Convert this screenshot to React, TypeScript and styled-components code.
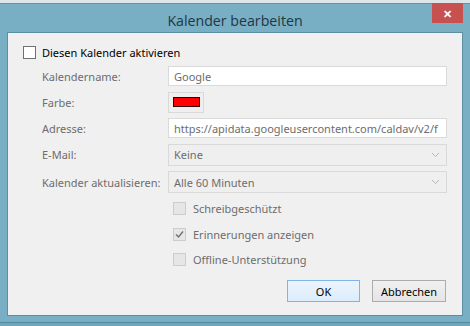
import styled, { createGlobalStyle } from "styled-components";

const GlobalStyle = createGlobalStyle`
  html, body {
    margin: 0;
    padding: 0;
    background: #dfe7eb;
  }
  * {
    box-sizing: border-box;
  }
`;

function App() {
  return (
    <>
      <GlobalStyle />
      <Screen>
        <Backdrop />
        <Window>
          <TitleBar>
            <Title>Kalender bearbeiten</Title>
            <CloseButton>✕</CloseButton>
          </TitleBar>
          <Content>
            <CheckRow>
              <Box />
              <span>Diesen Kalender aktivieren</span>
            </CheckRow>
            <Form>
              <Label>Kalendername:</Label>
              <TextInput>Google</TextInput>
              <Label>Farbe:</Label>
              <ColorButton>
                <Swatch />
              </ColorButton>
              <Label>Adresse:</Label>
              <TextInput>https://apidata.googleusercontent.com/caldav/v2/f</TextInput>
              <Label>E-Mail:</Label>
              <Select>
                Keine
                <Chevron />
              </Select>
              <Label>Kalender aktualisieren:</Label>
              <Select>
                Alle 60 Minuten
                <Chevron />
              </Select>
            </Form>
            <Options>
              <Option>
                <Box disabled />
                Schreibgeschützt
              </Option>
              <Option>
                <Box disabled>
                  <Tick />
                </Box>
                Erinnerungen anzeigen
              </Option>
              <Option>
                <Box disabled />
                Offline-Unterstützung
              </Option>
            </Options>
            <Footer>
              <Button $primary>OK</Button>
              <Button>Abbrechen</Button>
            </Footer>
          </Content>
        </Window>
        <Taskbar />
      </Screen>
    </>
  );
}

function Chevron() {
  return (
    <svg width="9" height="6" viewBox="0 0 9 6">
      <path d="M1 1 L4.5 4.5 L8 1" fill="none" stroke="#b4b4b4" strokeWidth="1" />
    </svg>
  );
}

function Tick() {
  return (
    <svg width="11" height="11" viewBox="0 0 11 11">
      <path d="M2 5.5 L4.5 8 L9 2.5" fill="none" stroke="#707070" strokeWidth="1.4" />
    </svg>
  );
}

interface BoxProps {
  disabled?: boolean;
}

interface ButtonProps {
  $primary?: boolean;
}

const Screen = styled.div`
  width: 470px;
  height: 326px;
  display: flex;
  flex-direction: column;
  overflow: hidden;
  font-family: "Noto Sans", "Open Sans", sans-serif;
  font-size: 11px;
`;

const Backdrop = styled.div`
  height: 3px;
  flex: none;
  background: #dde5e9;
`;

const Window = styled.div`
  height: 319px;
  flex: none;
  background: #78afc4;
  border-top: 1px solid #5f95aa;
  padding: 0 7px 6px 7px;
  display: flex;
  flex-direction: column;
`;

const TitleBar = styled.div`
  position: relative;
  height: 28px;
  flex: none;
  display: flex;
  align-items: center;
  justify-content: center;
`;

const Title = styled.div`
  font-family: "Open Sans", "Noto Sans", sans-serif;
  font-size: 14.2px;
  color: #223645;
  padding-top: 4px;
`;

const CloseButton = styled.div`
  position: absolute;
  top: -1px;
  right: 0;
  width: 31px;
  height: 20px;
  background: #c75050;
  color: #ffffff;
  font-size: 11px;
  font-weight: bold;
  display: flex;
  align-items: center;
  justify-content: center;
`;

const Content = styled.div`
  flex: 1;
  background: #f0f0f0;
  border: 1px solid #5d8ea2;
  padding: 13px 16px 0 15px;
  display: flex;
  flex-direction: column;
`;

const CheckRow = styled.label`
  display: flex;
  align-items: center;
  gap: 6px;
  color: #000000;
  height: 13px;
`;

const Box = styled.span<BoxProps>`
  width: 13px;
  height: 13px;
  flex: none;
  display: flex;
  align-items: center;
  justify-content: center;
  border: 1px solid ${(p) => (p.disabled ? "#cccccc" : "#707070")};
  background: ${(p) => (p.disabled ? "#e6e6e6" : "#ffffff")};
`;

const Form = styled.div`
  display: grid;
  grid-template-columns: 126px 279px;
  grid-template-rows: 20px 21px 20px 22px 22px;
  row-gap: 5.5px;
  margin-top: 7px;
  padding-left: 19px;
  align-items: center;
`;

const Label = styled.div`
  color: #6d6d6d;
  white-space: nowrap;
`;

const TextInput = styled.div`
  height: 100%;
  background: #ffffff;
  border: 1px solid #dadada;
  color: #6d6d6d;
  padding: 0 5px;
  display: flex;
  align-items: center;
  white-space: nowrap;
  overflow: hidden;
`;

const ColorButton = styled.div`
  width: 36px;
  height: 100%;
  border: 1px solid #d9d9d9;
  background: #efefef;
  display: flex;
  align-items: center;
  justify-content: center;
`;

const Swatch = styled.div`
  width: 27px;
  height: 10px;
  background: #ff0000;
  border: 1px solid #3a0000;
`;

const Select = styled.div`
  height: 100%;
  background: #efefef;
  border: 1px solid #d9d9d9;
  color: #6d6d6d;
  padding: 0 6px 0 5px;
  display: flex;
  align-items: center;
  justify-content: space-between;
`;

const Options = styled.div`
  display: flex;
  flex-direction: column;
  gap: 12.5px;
  margin-top: 9px;
  padding-left: 150px;
`;

const Option = styled.label`
  display: flex;
  align-items: center;
  gap: 7px;
  height: 13px;
  color: #6d6d6d;
`;

const Footer = styled.div`
  display: flex;
  justify-content: flex-end;
  gap: 12px;
  margin-top: 14px;
`;

const Button = styled.button<ButtonProps>`
  font-family: inherit;
  font-size: 11px;
  height: 22px;
  width: ${(p) => (p.$primary ? "73px" : "74px")};
  padding: 0;
  color: #000000;
  border: 1px solid ${(p) => (p.$primary ? "#7eb4ea" : "#acacac")};
  background: ${(p) =>
    p.$primary
      ? "linear-gradient(#ecf4fc, #dcecfc)"
      : "linear-gradient(#f0f0f0, #e5e5e5)"};
`;

const Taskbar = styled.div`
  flex: 1;
  background: #6fa6ba;
  border-top: 1px solid #54889c;
`;

export default App;
